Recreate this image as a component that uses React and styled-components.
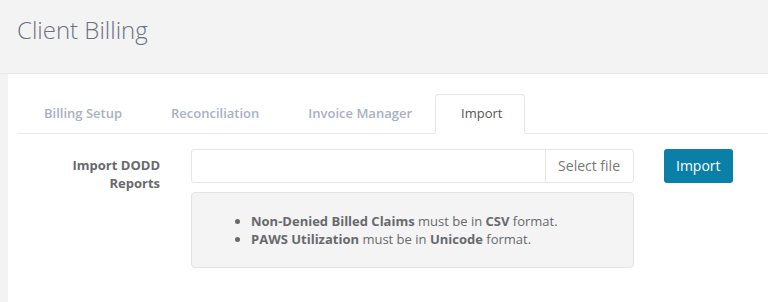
import React from "react";
import styled, { createGlobalStyle } from "styled-components";

const GlobalStyle = createGlobalStyle`
  body {
    margin: 0;
    background: #f3f3f4;
    font-family: "Open Sans", "Liberation Sans", sans-serif;
    font-size: 13px;
    color: #676a6c;
  }
`;

const PageHeading = styled.header`
  height: 56px;
  padding: 17px 0 0 17px;
  background: #f3f3f4;
  border-bottom: 1px solid #e7eaec;

  > h2 {
    margin: 0;
    font-size: 24px;
    font-weight: 300;
    line-height: 26px;
    color: #6a7180;
  }
`;

const Wrapper = styled.div`
  padding-left: 8px;
  background: #f3f3f4;
`;

const Panel = styled.main`
  box-sizing: border-box;
  min-height: 228px;
  padding: 20px 0 20px 10px;
  background: #fff;
`;

const TabNav = styled.ul`
  display: flex;
  list-style: none;
  margin: 0;
  padding: 0;
  border-bottom: 1px solid #e7eaec;
`;

const Tab = styled.li`
  margin: 0 2px -1px 0;
  padding: 10px ${({ active }) => (active ? 22 : 20)}px 10px 25px;
  line-height: 17.5px;
  font-weight: ${({ active }) => (active ? 400 : 600)};
  color: ${({ active }) => (active ? "#555" : "#a7b1c2")};
  background: ${({ active }) => (active ? "#fff" : "transparent")};
  border: 1px solid ${({ active }) => (active ? "#e7eaec" : "transparent")};
  border-bottom-color: ${({ active }) => (active ? "#fff" : "transparent")};
  border-radius: 4px 4px 0 0;
  cursor: pointer;
`;

const TabContent = styled.section`
  padding-top: 15px;
`;

const FormRow = styled.div`
  display: grid;
  grid-template-columns: 142px 444px auto;
  column-gap: 30px;
  align-items: start;
`;

const Label = styled.label`
  padding-top: 7px;
  text-align: right;
  font-weight: 700;
  line-height: 18px;
`;

const InputGroup = styled.div`
  display: flex;
  height: 34px;
  box-sizing: border-box;
  margin-left: 1px;
  border: 1px solid #e5e6e7;
  border-radius: 3px;
  background: #fff;
`;

const FileName = styled.div`
  flex: 1;
`;

const Addon = styled.span`
  display: flex;
  align-items: center;
  padding: 0 13px 0 12px;
  border-left: 1px solid #e5e6e7;
  font-size: 14px;
  color: #777;
`;

const Well = styled.div`
  margin: 9px 0 0 1px;
  padding: 19px;
  background: #f4f4f4;
  border: 1px solid #e3e3e3;
  border-radius: 4px;

  > ul {
    margin: 0;
    padding-left: 40px;
    line-height: 18px;
  }

  strong {
    font-weight: 700;
  }
`;

const Button = styled.button`
  height: 34px;
  padding: 0 12px;
  border: none;
  border-radius: 3px;
  background: #0a7fa7;
  color: #fff;
  font-family: inherit;
  font-size: 14px;
  cursor: pointer;
`;

const tabs = ["Billing Setup", "Reconciliation", "Invoice Manager", "Import"];

const App = () => (
  <>
    <GlobalStyle />
    <PageHeading>
      <h2>Client Billing</h2>
    </PageHeading>
    <Wrapper>
      <Panel>
        <TabNav>
          {tabs.map((t) => (
            <Tab key={t} active={t === "Import"}>
              {t}
            </Tab>
          ))}
        </TabNav>
        <TabContent>
          <FormRow>
            <Label>
              Import DODD
              <br />
              Reports
            </Label>
            <div>
              <InputGroup>
                <FileName />
                <Addon>Select file</Addon>
              </InputGroup>
              <Well>
                <ul>
                  <li>
                    <strong>Non-Denied Billed Claims</strong> must be in{" "}
                    <strong>CSV</strong> format.
                  </li>
                  <li>
                    <strong>PAWS Utilization</strong> must be in{" "}
                    <strong>Unicode</strong> format.
                  </li>
                </ul>
              </Well>
            </div>
            <div>
              <Button>Import</Button>
            </div>
          </FormRow>
        </TabContent>
      </Panel>
    </Wrapper>
  </>
);

export default App;
